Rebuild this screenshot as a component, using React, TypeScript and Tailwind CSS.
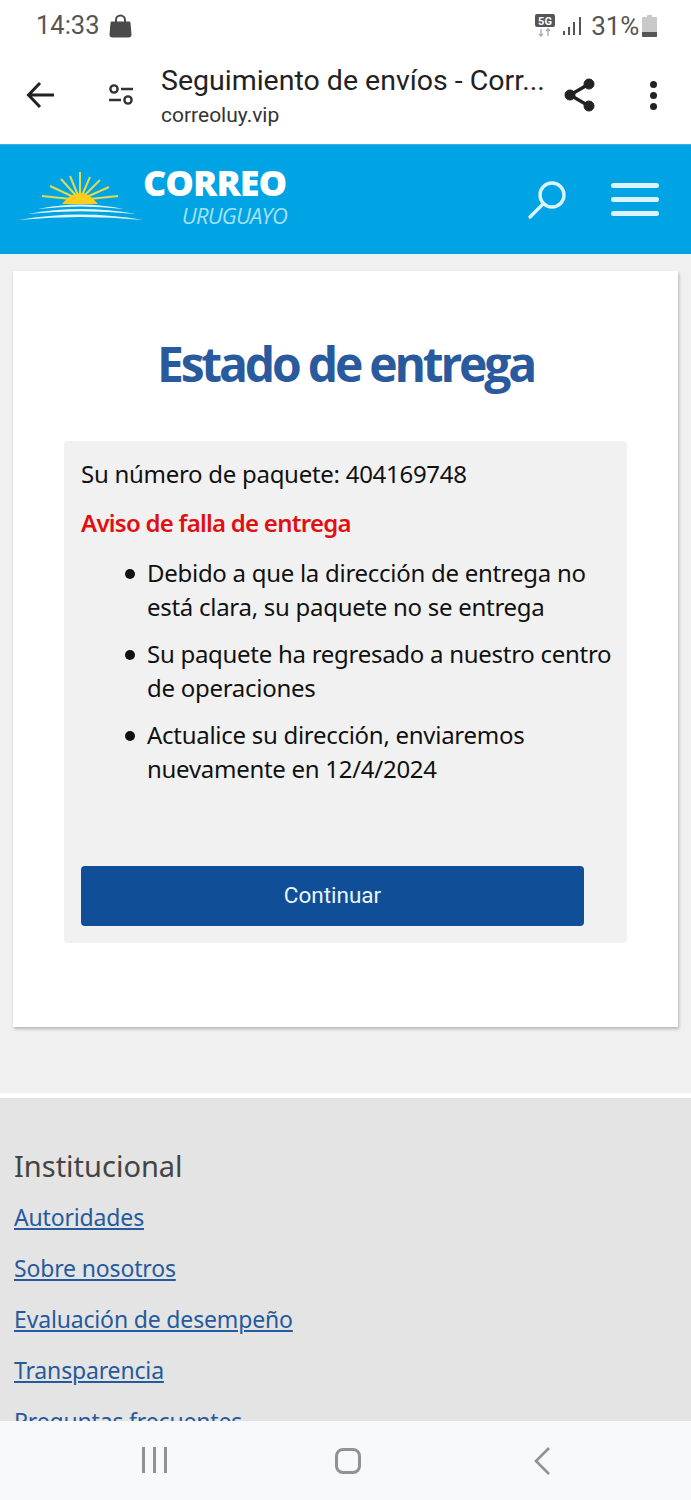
const links = ['Autoridades', 'Sobre nosotros', 'Evaluación de desempeño', 'Transparencia', 'Preguntas frecuentes']

const bullets = [
  ['Debido a que la dirección de entrega no', 'está clara, su paquete no se entrega'],
  ['Su paquete ha regresado a nuestro centro', 'de operaciones'],
  ['Actualice su dirección, enviaremos', 'nuevamente en 12/4/2024'],
]

const rays = [
  'M62 28 24 24',
  'M62 28 32 14',
  'M62 28 43 7',
  'M62 28 52 4',
  'M62 28 62 0',
  'M62 28 72 5',
  'M62 28 82 8',
  'M62 28 91 15',
  'M62 28 100 24',
]

function StatusBar() {
  return (
    <div className="flex h-[53px] items-center justify-between pl-9 pr-[34px] pb-[1px] font-['Roboto',sans-serif] text-[#555]">
      <div className="flex items-center gap-[9px]">
        <span className="text-[25.5px] leading-none">14:33</span>
        <svg width="23" height="24" viewBox="0 0 23 24" fill="#4a4a4a">
          <path d="M3 7.5h17a1.5 1.5 0 0 1 1.5 1.4l1 11.6a3 3 0 0 1-3 3h-16a3 3 0 0 1-3-3l1-11.6A1.5 1.5 0 0 1 3 7.5z" />
          <path d="M7 10V6a4.500 4.500 0 0 1 9 0v4" fill="none" stroke="#4a4a4a" strokeWidth="2" />
        </svg>
      </div>
      <div className="flex items-center">
        <svg width="20" height="24" viewBox="0 0 20 24" className="mr-[8px]">
          <rect width="20" height="13" rx="2" fill="#555" />
          <text x="10" y="11" textAnchor="middle" fontSize="11" fontWeight="700" fill="#fff" fontFamily="Roboto, sans-serif">5G</text>
          <path d="M6 15v7m-2-2 2 2 2-2M13 22v-7m-2 2 2-2 2 2" stroke="#aaa" strokeWidth="1.3" fill="none" />
        </svg>
        <svg width="19" height="20" viewBox="0 0 19 20" fill="#555" className="mr-[9px]">
          <rect x="0" y="15" width="2" height="4" />
          <rect x="5" y="11" width="2" height="8" />
          <rect x="10" y="6" width="2" height="13" />
          <rect x="16" y="1" width="2" height="18" />
        </svg>
        <span className="text-[26px] leading-none tracking-[-0.2px]">31%</span>
        <svg width="15" height="22" viewBox="0 0 15 22" className="ml-[3px]">
          <path d="M5 0h5v2h4a1 1 0 0 1 1 1v18a1 1 0 0 1-1 1H1a1 1 0 0 1-1-1V3a1 1 0 0 1 1-1h4z" fill="#c9c9c9" />
          <path d="M0 17h15v4a1 1 0 0 1-1 1H1a1 1 0 0 1-1-1z" fill="#555" />
        </svg>
      </div>
    </div>
  )
}

function BrowserBar() {
  return (
    <div className="flex h-[91px] items-start font-['Roboto',sans-serif] text-[#222]">
      <svg width="30" height="28" viewBox="0 0 30 28" fill="none" stroke="#222" strokeWidth="3" className="ml-[26px] mt-[28px]">
        <path d="M28 14H3M14 2 2.500 14 14 26" />
      </svg>
      <svg width="26" height="22" viewBox="0 0 26 22" fill="none" stroke="#333" strokeWidth="2.4" className="ml-[52px] mt-[31px]">
        <circle cx="6" cy="5" r="3.6" />
        <path d="M13 5h12M1 16h12" />
        <circle cx="20" cy="16" r="3.6" />
      </svg>
      <div className="ml-[27px] mt-[12px] w-[385px]">
        <div className="text-[28.5px] leading-[32px] whitespace-nowrap">Seguimiento de envíos - Corr...</div>
        <div className="mt-[5px] text-[21px] leading-[26px] text-[#333]">correoluy.vip</div>
      </div>
      <svg width="34" height="38" viewBox="0 0 34 36" fill="#222" stroke="#222" className="ml-[17px] mt-[23px]">
        <path d="M26 7 7 18l19 11" fill="none" strokeWidth="3.4" />
        <circle cx="26" cy="7" r="5" />
        <circle cx="7" cy="18" r="5" />
        <circle cx="26" cy="29" r="5" />
      </svg>
      <div className="ml-[53px] mt-[28px] flex flex-col gap-[4px]">
        <span className="h-[7px] w-[7px] rounded-full bg-[#222]" />
        <span className="h-[7px] w-[7px] rounded-full bg-[#222]" />
        <span className="h-[7px] w-[7px] rounded-full bg-[#222]" />
      </div>
    </div>
  )
}

function SiteHeader() {
  return (
    <header className="flex h-[110px] items-center border-t border-[#3db3e0] bg-[#00a4e4]">
      <svg width="126" height="52" viewBox="0 0 126 52" className="ml-[18px] mt-[-3px]">
        <g stroke="#dcdc50" strokeWidth="2">
          {rays.map((d) => (
            <path key={d} d={d} />
          ))}
        </g>
        <path d="M44 32Q62 10 80 32z" fill="#ffcd1c" />
        <g fill="#e6f6fd">
          <path d="M20 37Q62 28 106 37Q62 32 20 37z" />
          <path d="M10 42Q62 32 118 42Q62 36.500 10 42z" />
          <path d="M1 48Q62 37 125 48Q62 42 1 48z" />
        </g>
      </svg>
      <div className="ml-[-1px] mt-[-6px] w-[144px]">
        <div className="font-['Open_Sans',sans-serif] text-[36px] font-extrabold leading-[30px] tracking-[-1px] text-white">CORREO</div>
        <div className="mt-[6px] text-right font-['Open_Sans',sans-serif] text-[22px] italic leading-[22px] tracking-[-0.8px] text-[#a5e0f7]">URUGUAYO</div>
      </div>
      <svg width="42" height="40" viewBox="0 0 42 40" fill="none" stroke="#d9f4fd" strokeWidth="3.4" className="ml-[240px]">
        <circle cx="25" cy="15" r="12" />
        <path d="M16 24 3 37" strokeLinecap="round" />
      </svg>
      <div className="ml-[42px] flex flex-col gap-[9px]">
        <span className="h-[5px] w-[48px] rounded-sm bg-[#d9f4fd]" />
        <span className="h-[5px] w-[48px] rounded-sm bg-[#d9f4fd]" />
        <span className="h-[5px] w-[48px] rounded-sm bg-[#d9f4fd]" />
      </div>
    </header>
  )
}

export default function App() {
  return (
    <div className="relative h-[1500px] w-[691px] overflow-hidden bg-white font-['Noto_Sans',sans-serif]">
      <StatusBar />
      <BrowserBar />
      <SiteHeader />

      <main className="bg-[#f0f0f0] px-[13px] pt-[17px] pb-[66px]">
        <section className="h-[756px] bg-white px-[51px] pt-[60px] shadow-[1px_2px_3px_rgba(0,0,0,0.25)]">
          <h1 className="text-center font-['Open_Sans',sans-serif] text-[48px] font-bold leading-[66px] tracking-[-3.2px] text-[#2a5a9e]">
            Estado de entrega
          </h1>
          <div className="mt-[44px] h-[502px] rounded-[4px] bg-[#f1f1f1] pl-[17px] pr-[43px] pt-[16px] text-[24px] tracking-[-0.28px] text-[#111]">
            <p className="leading-[34px]">Su número de paquete: 404169748</p>
            <p className="mt-[15px] text-[24px] font-semibold leading-[34px] tracking-[-0.75px] text-[#e01010]">Aviso de falla de entrega</p>
            <ul className="mt-[16px] flex flex-col gap-[13px] pl-[66px]">
              {bullets.map((lines) => (
                <li key={lines[0]} className="relative whitespace-nowrap leading-[34px]">
                  <span className="absolute left-[-22px] top-[13px] h-[10px] w-[10px] rounded-full bg-[#111]" />
                  {lines[0]}
                  <br />
                  {lines[1]}
                </li>
              ))}
            </ul>
            <button type="button" className="mt-[80px] h-[60px] w-full rounded-[4px] bg-[#104e98] font-['Roboto',sans-serif] text-[22.5px] tracking-normal text-[#eaf5ff]">
              Continuar
            </button>
          </div>
        </section>
      </main>

      <footer className="border-t-[5px] border-white bg-[#e4e4e4] px-[14px] pt-[48px]">
        <h2 className="text-[29px] leading-[40px] text-[#444]">Institucional</h2>
        <ul className="mt-[14px] flex flex-col gap-[17px]">
          {links.map((link) => (
            <li key={link}>
              <a href="#" className="text-[23px] leading-[34px] tracking-[-0.16px] text-[#255a9c] underline">{link}</a>
            </li>
          ))}
        </ul>
      </footer>

      <nav className="absolute inset-x-0 bottom-0 flex h-[79px] items-start bg-[#f8f9fc]">
        <div className="ml-[142px] mt-[26px] flex gap-[8px]">
          <span className="h-[26px] w-[3px] bg-[#929292]" />
          <span className="h-[26px] w-[3px] bg-[#929292]" />
          <span className="h-[26px] w-[3px] bg-[#929292]" />
        </div>
        <span className="ml-[168px] mt-[27px] h-[26px] w-[26px] rounded-[8px] border-[3px] border-[#929292]" />
        <svg width="18" height="30" viewBox="0 0 18 30" fill="none" stroke="#929292" strokeWidth="2.6" className="ml-[172px] mt-[25px]">
          <path d="M16 2 3 15l13 13" />
        </svg>
      </nav>
    </div>
  )
}
